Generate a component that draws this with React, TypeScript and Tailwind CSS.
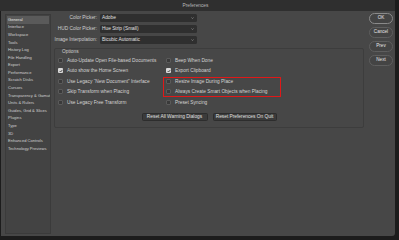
import React from "react";

const sidebar = [
  "General",
  "Interface",
  "Workspace",
  "Tools",
  "History Log",
  "File Handling",
  "Export",
  "Performance",
  "Scratch Disks",
  "Cursors",
  "Transparency & Gamut",
  "Units & Rulers",
  "Guides, Grid & Slices",
  "Plugins",
  "Type",
  "3D",
  "Enhanced Controls",
  "Technology Previews",
];

const selects = [
  ["Color Picker:", "Adobe"],
  ["HUD Color Picker:", "Hue Strip (Small)"],
  ["Image Interpolation:", "Bicubic Automatic"],
];

const leftChecks: [string, boolean][] = [
  ["Auto-Update Open File-based Documents", false],
  ["Auto show the Home Screen", true],
  ["Use Legacy \u201CNew Document\u201D Interface", false],
  ["Skip Transform when Placing", false],
  ["Use Legacy Free Transform", false],
];

const rightChecks: [string, boolean][] = [
  ["Beep When Done", false],
  ["Export Clipboard", true],
  ["Resize Image During Place", false],
  ["Always Create Smart Objects when Placing", false],
  ["Preset Syncing", false],
];

function Check({ label, checked }: { label: string; checked: boolean }) {
  return (
    <div className="flex h-[10.5px] items-center gap-[4px]">
      {checked ? (
        <div className="flex h-[5px] w-[5px] items-center justify-center rounded-[1px] bg-[#d8d8d8]">
          <svg width="4" height="4" viewBox="0 0 4 4">
            <path d="M0.6 2 L1.6 3 L3.4 0.9" stroke="#333" strokeWidth="0.8" fill="none" />
          </svg>
        </div>
      ) : (
        <div className="h-[5px] w-[5px] rounded-[1px] border-[0.5px] border-[#5a5a5a] bg-[#3a3a3a]" />
      )}
      <span className="whitespace-nowrap">{label}</span>
    </div>
  );
}

export default function App() {
  return (
    <div
      className="flex h-[240px] w-[399px] flex-col overflow-hidden bg-[#1c1c1c] text-[#d4d4d4]"
      style={{ fontFamily: '"Liberation Sans", Arial, sans-serif' }}
    >
      <div className="flex h-[11px] w-[395px] shrink-0 items-center justify-center bg-[#2f2f2f] text-[4.8px] text-[#b8b8b8]">
        <span className="ml-[-4px]">Preferences</span>
      </div>
      <div className="ml-[1px] flex h-[225px] w-[394px] items-start rounded-br-[3px] bg-[#474747] pl-[4px] pt-[2px]">
        {/* Sidebar */}
        <div className="mt-[1px] h-[220px] w-[46px] overflow-hidden border border-[#3b3b3b] bg-[#434343] px-[1px] pt-[1px] text-[4.1px]">
          {sidebar.map((s, i) => (
            <div
              key={s}
              className={
                "flex h-[7.6px] items-center whitespace-nowrap pl-[1px] " +
                (i === 0 ? "bg-[#5a5a5a] text-[#e8e8e8]" : "text-[#d0d0d0]")
              }
            >
              {s}
            </div>
          ))}
        </div>

        {/* Main */}
        <div className="ml-[3px] mt-[1px] flex w-[310px] flex-col text-[4.8px]">
          <div className="flex flex-col gap-[3px]">
            {selects.map(([l, v]) => (
              <div key={l} className="flex h-[8px] items-center">
                <div className="w-[44px] whitespace-nowrap pr-[1px] text-right text-[#cfcfcf]">{l}</div>
                <div className="ml-[2px] flex h-[8px] w-[97px] items-center justify-between rounded-[1.5px] bg-[#2f2f2f] pl-[2px] pr-[3px] text-[#e0e0e0]">
                  <span className="whitespace-nowrap">{v}</span>
                  <svg width="3" height="2" viewBox="0 0 3 2">
                    <path d="M0.3 0.4 L1.5 1.6 L2.7 0.4" stroke="#9a9a9a" strokeWidth="0.6" fill="none" />
                  </svg>
                </div>
              </div>
            ))}
          </div>

          <div className="relative mt-[4px] h-[80px] w-[310px] rounded-[2px] border border-[#3d3d3d]">
            <div className="pl-[7px] leading-[6px] text-[#cfcfcf]">Options</div>
            <div className="flex pl-[3px]">
              <div className="w-[108px]">
                {leftChecks.map(([l, c]) => (
                  <Check key={l} label={l} checked={c} />
                ))}
              </div>
              <div>
                {rightChecks.map(([l, c]) => (
                  <Check key={l} label={l} checked={c} />
                ))}
              </div>
            </div>
            <div className="mt-[5.5px] flex justify-center gap-[5px]">
              <div className="flex h-[8px] w-[66px] items-center justify-center rounded-[1.5px] border-[0.5px] border-[#2d2d2d] bg-[#3b3b3b] text-[#e0e0e0]">
                Reset All Warning Dialogs
              </div>
              <div className="flex h-[8px] w-[64px] items-center justify-center rounded-[1.5px] border-[0.5px] border-[#2d2d2d] bg-[#3b3b3b] text-[#e0e0e0]">
                Reset Preferences On Quit
              </div>
            </div>
            <div className="absolute left-[108px] top-[28px] h-[20px] w-[118px] border border-[#e01818]" />
          </div>
        </div>

        {/* Right buttons */}
        <div className="ml-[5px] flex w-[24px] flex-col gap-[3px] text-[4.6px]">
          {["OK", "Cancel", "Prev", "Next"].map((b, i) => (
            <div
              key={b}
              className={
                "flex h-[11px] items-center justify-center rounded-full border bg-[#444] text-[#e4e4e4] " +
                (i === 0 ? "border-[#8a8a8a]" : "border-[#5e5e5e]")
              }
            >
              {b}
            </div>
          ))}
        </div>
      </div>
    </div>
  );
}
